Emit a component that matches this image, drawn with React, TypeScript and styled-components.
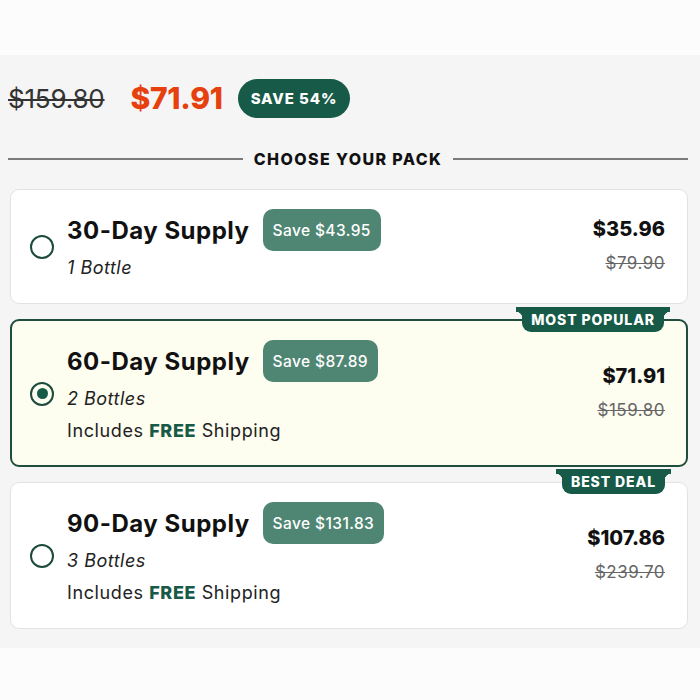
import React from 'react';
import styled, { createGlobalStyle } from 'styled-components';

const GlobalStyle = createGlobalStyle`
	html, body {
		margin: 0;
		padding: 0;
		background: #fcfcfc;
		font-family: Inter, "Open Sans", sans-serif;
		color: #111;
	}
`;

const green = '#165a47';
const paleGreen = '#4f8673';

const Section = styled.div`
	margin-top: 55px;
	background: #f5f5f5;
	padding: 23px 12px 20px 8px;
	height: 593px;
	box-sizing: border-box;
`;

const PriceRow = styled.div`
	display: flex;
	align-items: center;
	height: 40px;
`;

const OldTotal = styled.span`
	font-size: 26px;
	color: #333;
	text-decoration: line-through;
	text-decoration-thickness: 2px;
	letter-spacing: -0.2px;
`;

const NewTotal = styled.span`
	margin-left: 26px;
	font-size: 30px;
	font-weight: 800;
	color: #e5400e;
	letter-spacing: -0.3px;
`;

const SaveBadge = styled.span`
	margin-left: 15px;
	height: 39px;
	padding: 0 13px;
	display: inline-flex;
	align-items: center;
	border-radius: 20px;
	background: ${green};
	color: #fff;
	font-size: 15px;
	font-weight: 800;
	letter-spacing: 0.9px;
`;

const Divider = styled.div`
	display: flex;
	align-items: center;
	gap: 11px;
	margin: 31px 0 20px;

	&::before,
	&::after {
		content: '';
		flex: 1;
		height: 2px;
		background: #7a7a7a;
	}
`;

const DividerText = styled.span`
	font-size: 16px;
	font-weight: 800;
	letter-spacing: 1.4px;
	color: #111;
`;

const CardList = styled.div`
	display: flex;
	flex-direction: column;
	gap: 15px;
	padding-left: 2px;
`;

const Card = styled.div<{ $selected?: boolean }>`
	position: relative;
	display: flex;
	align-items: center;
	box-sizing: border-box;
	padding: ${(p) => (p.$selected ? '19px 21px 22px 18px' : '19px 22px 23px 19px')};
	border-radius: 9px;
	background: ${(p) => (p.$selected ? '#fdfdf0' : '#fff')};
	border: ${(p) => (p.$selected ? `2px solid #1f4d3e` : '1px solid #e2e2e2')};
`;

const Radio = styled.span<{ $checked?: boolean }>`
	flex: none;
	width: 24px;
	height: 24px;
	box-sizing: border-box;
	border-radius: 50%;
	border: 2.5px solid #1c4a3c;
	display: flex;
	align-items: center;
	justify-content: center;
	margin-top: 4px;

	&::after {
		content: '';
		display: ${(p) => (p.$checked ? 'block' : 'none')};
		width: 11px;
		height: 11px;
		border-radius: 50%;
		background: ${green};
	}
`;

const Info = styled.div`
	flex: 1;
	margin-left: 13px;
	display: flex;
	flex-direction: column;
`;

const TitleRow = styled.div`
	display: flex;
	align-items: center;
	gap: 13px;
`;

const Title = styled.span`
	font-size: 24px;
	font-weight: 700;
	letter-spacing: 0.5px;
`;

const SavePill = styled.span`
	height: 42px;
	padding: 0 10px;
	display: inline-flex;
	align-items: center;
	border-radius: 10px;
	background: ${paleGreen};
	color: #fff;
	font-size: 15.5px;
	font-weight: 500;
	letter-spacing: 0.4px;
`;

const Bottles = styled.span`
	margin-top: 5px;
	font-size: 18px;
	font-style: italic;
	line-height: 24px;
	letter-spacing: 0.5px;
	color: #222;
`;

const Shipping = styled.span`
	margin-top: 8px;
	font-size: 18px;
	line-height: 24px;
	letter-spacing: 0.6px;
	color: #222;

	b {
		color: ${green};
		font-weight: 800;
	}
`;

const Prices = styled.div`
	display: flex;
	flex-direction: column;
	align-items: flex-end;
	gap: 10px;
`;

const Price = styled.span`
	font-size: 20px;
	font-weight: 800;
	line-height: 26px;
`;

const OldPrice = styled.span`
	font-size: 17px;
	line-height: 22px;
	letter-spacing: 0.5px;
	color: #666;
	text-decoration: line-through;
`;

const Tab = styled.span`
	position: absolute;
	top: -14px;
	right: 22px;
	height: 25px;
	padding: 0 9px;
	display: flex;
	align-items: center;
	background: ${green};
	color: #fff;
	font-size: 14px;
	font-weight: 800;
	letter-spacing: 0.9px;
	border-radius: 0 0 9px 9px;

	&::before,
	&::after {
		content: '';
		position: absolute;
		top: 0;
		width: 6px;
		height: 11px;
	}
	&::before {
		left: -6px;
		background: radial-gradient(circle at 0 100%, transparent 6px, ${green} 6.5px);
	}
	&::after {
		right: -6px;
		background: radial-gradient(circle at 100% 100%, transparent 6px, ${green} 6.5px);
	}
`;

type Pack = {
	days: number;
	save: string;
	bottles: string;
	price: string;
	old: string;
	shipping?: boolean;
	tab?: string;
	selected?: boolean;
};

const packs: Pack[] = [
	{ days: 30, save: '$43.95', bottles: '1 Bottle', price: '$35.96', old: '$79.90' },
	{
		days: 60,
		save: '$87.89',
		bottles: '2 Bottles',
		price: '$71.91',
		old: '$159.80',
		shipping: true,
		tab: 'MOST POPULAR',
		selected: true,
	},
	{
		days: 90,
		save: '$131.83',
		bottles: '3 Bottles',
		price: '$107.86',
		old: '$239.70',
		shipping: true,
		tab: 'BEST DEAL',
	},
];

const PackCard = ({ pack }: { pack: Pack }) => (
	<Card $selected={pack.selected}>
		{pack.tab && <Tab>{pack.tab}</Tab>}
		<Radio $checked={pack.selected} />
		<Info>
			<TitleRow>
				<Title>{pack.days}-Day Supply</Title>
				<SavePill>Save {pack.save}</SavePill>
			</TitleRow>
			<Bottles>{pack.bottles}</Bottles>
			{pack.shipping && (
				<Shipping>
					Includes <b>FREE</b> Shipping
				</Shipping>
			)}
		</Info>
		<Prices>
			<Price>{pack.price}</Price>
			<OldPrice>{pack.old}</OldPrice>
		</Prices>
	</Card>
);

const App = () => (
	<>
		<GlobalStyle />
		<Section>
			<PriceRow>
				<OldTotal>$159.80</OldTotal>
				<NewTotal>$71.91</NewTotal>
				<SaveBadge>SAVE 54%</SaveBadge>
			</PriceRow>
			<Divider>
				<DividerText>CHOOSE YOUR PACK</DividerText>
			</Divider>
			<CardList>
				{packs.map((p) => (
					<PackCard key={p.days} pack={p} />
				))}
			</CardList>
		</Section>
	</>
);

export default App;
